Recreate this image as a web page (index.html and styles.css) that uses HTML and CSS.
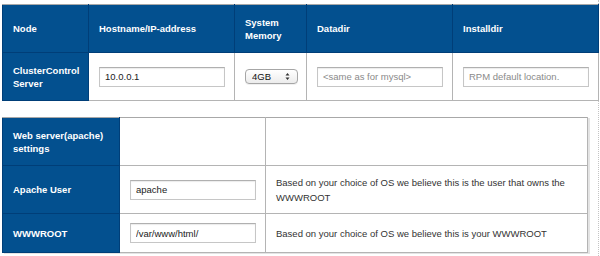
FILE: index.html
```html
<!DOCTYPE html>
<html lang="en">
<head>
    <meta charset="UTF-8">
    <title>ClusterControl Setup</title>
    <link rel="stylesheet" href="styles.css">
</head>
<body>
    <div class="page">
        <table class="config node-table">
            <colgroup>
                <col class="c-node">
                <col class="c-host">
                <col class="c-mem">
                <col class="c-dir">
                <col class="c-dir">
            </colgroup>
            <thead>
                <tr>
                    <th>Node</th>
                    <th>Hostname/IP-address</th>
                    <th>System<br>Memory</th>
                    <th>Datadir</th>
                    <th>Installdir</th>
                </tr>
            </thead>
            <tbody>
                <tr>
                    <th>ClusterControl<br>Server</th>
                    <td><input type="text" class="field" value="10.0.0.1"></td>
                    <td>
                        <span class="select-wrap">
                            <select class="mem-select">
                                <option>4GB</option>
                                <option>8GB</option>
                                <option>16GB</option>
                            </select>
                            <svg class="select-arrows" width="5" height="9" viewBox="0 0 5 9">
                                <path d="M0.5 3.5 L2.5 1 L4.5 3.5 Z M0.5 5.5 L2.5 8 L4.5 5.5 Z" fill="#333"/>
                            </svg>
                        </span>
                    </td>
                    <td><input type="text" class="field" placeholder="<same as for mysql>"></td>
                    <td><input type="text" class="field" placeholder="RPM default location."></td>
                </tr>
            </tbody>
        </table>

        <table class="config web-table">
            <colgroup>
                <col class="c-label">
                <col class="c-input">
                <col class="c-desc">
            </colgroup>
            <tbody>
                <tr class="row-tall">
                    <th>Web server(apache)<br>settings</th>
                    <td></td>
                    <td></td>
                </tr>
                <tr class="row-tall">
                    <th>Apache User</th>
                    <td><input type="text" class="field" value="apache"></td>
                    <td>Based on your choice of OS we believe this is the user that owns the WWWROOT</td>
                </tr>
                <tr class="row-short">
                    <th>WWWROOT</th>
                    <td><input type="text" class="field" value="/var/www/html/"></td>
                    <td>Based on your choice of OS we believe this is your WWWROOT</td>
                </tr>
            </tbody>
        </table>
    </div>
</body>
</html>
```

FILE: styles.css
```css
body {
    margin: 0;
    font-family: "Liberation Sans", Arial, Helvetica, sans-serif;
    font-size: 9.5px;
    color: #333;
    background-color: #fff;
}
.page {
    width: 599px;
    height: 256px;
    box-sizing: border-box;
    padding: 4px 0 0 2px;
    border-right: 1px dotted #c4c4c4;
}
.config {
    border-collapse: collapse;
    table-layout: fixed;
}
.config th,
.config td {
    padding: 0 10px;
    vertical-align: middle;
    text-align: left;
    line-height: 13px;
}
.config th {
    background-color: #03508f;
    color: #fff;
    font-weight: bold;
    border: 1px solid #003e78;
}
.config td {
    background-color: #fff;
    border: 1px solid #b4b4b4;
}
.node-table {
    width: 595px;
}
.node-table thead th {
    border-top-color: #a8a8a8;
}
.node-table tr {
    height: 48px;
}
.c-node { width: 86px; }
.c-host { width: 146px; }
.c-mem { width: 72px; }
.c-dir { width: 146px; }

.web-table {
    width: 585px;
    margin-top: 16px;
    box-shadow: 2px 1px 0 #e4e4e4;
}
.web-table tr:first-child th,
.web-table tr:first-child td {
    border-top-color: #a8a8a8;
}
.row-tall {
    height: 48px;
}
.row-short {
    height: 39px;
}
.web-table td {
    line-height: 15px;
}
.c-label { width: 117px; }
.c-input { width: 146px; }
.c-desc { width: 322px; }

.field {
    display: block;
    width: 126px;
    height: 20px;
    box-sizing: border-box;
    margin: 0 0 0 0;
    padding: 0 5px;
    font-family: "Liberation Sans", Arial, Helvetica, sans-serif;
    font-size: 9.5px;
    color: #222;
    border: 1px solid #c6c6c6;
    border-top-color: #b0b0b0;
    box-shadow: inset 0 1px 1px rgba(0,0,0,0.08);
    background: #fff;
}
.field::placeholder {
    color: #8a8a8a;
}
.select-wrap {
    position: relative;
    display: inline-block;
    vertical-align: middle;
}
.mem-select {
    -webkit-appearance: none;
    appearance: none;
    display: block;
    width: 53px;
    height: 15px;
    margin: 0;
    padding: 0 0 0 6px;
    font-family: "Liberation Sans", Arial, Helvetica, sans-serif;
    font-size: 9.5px;
    color: #111;
    border: 1px solid #a6a6a6;
    border-radius: 4px;
    background: linear-gradient(#ffffff, #ececec);
    box-shadow: 0 1px 0 rgba(0,0,0,0.06);
}
.select-arrows {
    position: absolute;
    right: 8px;
    top: 3px;
    pointer-events: none;
}
```
